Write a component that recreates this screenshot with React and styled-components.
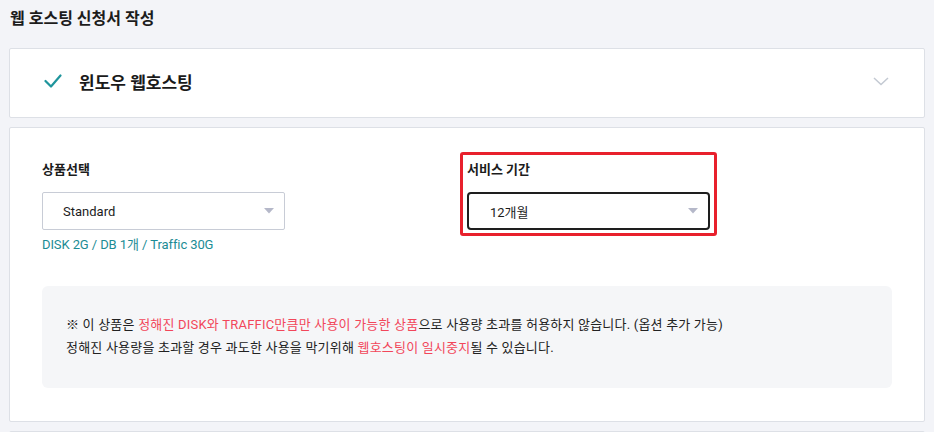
import styled, { createGlobalStyle } from 'styled-components';

const GlobalStyle = createGlobalStyle`
  body {
    margin: 0;
    background: #f3f4f8;
    font-family: Roboto, "Noto Sans CJK KR", sans-serif;
    color: #222;
  }
`;

const Page = styled.div`
  padding: 0 9px;
  height: 432px;
  overflow: hidden;
`;

const Title = styled.h1`
  margin: 0;
  padding: 9px 0 0 1px;
  height: 39px;
  font-size: 16px;
  line-height: 20px;
  font-weight: 700;
  color: #1c1c1c;
`;

const Card = styled.section`
  background: #fff;
  border: 1px solid #dde0e6;
  border-radius: 2px;
  margin-bottom: 9px;
  min-height: ${({ $stub }) => ($stub ? '40px' : '0')};
`;

const ProductHeader = styled.div`
  display: flex;
  align-items: center;
  height: 68px;
  padding: 0 35px 4px 34px;
  box-sizing: border-box;
`;

const ProductName = styled.span`
  flex: 1;
  margin-left: 17px;
  font-size: 17px;
  font-weight: 700;
  color: #1a1a1a;
`;

const Body = styled.div`
  padding: 33px 32px 33px 32px;
`;

const FieldGrid = styled.div`
  display: grid;
  grid-template-columns: 425px 1fr;
`;

const Field = styled.div`
  position: relative;
  width: 243px;
`;

const Highlight = styled.div`
  position: absolute;
  top: -9px;
  left: -7px;
  right: -7px;
  bottom: -6px;
  border: 3px solid #e8202c;
  border-radius: 3px;
  pointer-events: none;
`;

const Label = styled.div`
  font-size: 13px;
  line-height: 18px;
  font-weight: 700;
  color: #1c1c1c;
  margin-bottom: 13px;
`;

const Select = styled.div`
  display: flex;
  align-items: center;
  justify-content: space-between;
  height: 38px;
  box-sizing: border-box;
  padding: 0 10px 0 ${({ $active }) => ($active ? '21px' : '20px')};
  border: ${({ $active }) => ($active ? '2px solid #1e1e1e' : '1px solid #c8ccd6')};
  border-radius: ${({ $active }) => ($active ? '4px' : '2px')};
  font-size: 13px;
  color: #1c1c1c;
  background: #fff;
`;

const Spec = styled.div`
  margin-top: 6px;
  font-size: 13px;
  line-height: 18px;
  color: #1b8c95;
  letter-spacing: -0.1px;
`;

const Notice = styled.div`
  margin-top: 32px;
  background: #f5f6f8;
  border-radius: 6px;
  height: 102px;
  box-sizing: border-box;
  padding: 27px 24px 0 24px;
  font-size: 13px;
  line-height: 23px;
  letter-spacing: 0.2px;
  color: #222;
`;

const Em = styled.span`
  color: #f2465a;
`;

const Check = () => (
  <svg width="18" height="14" viewBox="0 0 18 14">
    <polyline points="1.5,7 7,12.5 16.5,1.5" fill="none" stroke="#1f959c" strokeWidth="2.2" strokeLinecap="round" strokeLinejoin="round" />
  </svg>
);

const Chevron = () => (
  <svg width="16" height="9" viewBox="0 0 16 9">
    <polyline points="1,1 8,7.5 15,1" fill="none" stroke="#c3c9d2" strokeWidth="1.5" />
  </svg>
);

const Caret = () => (
  <svg width="10" height="6" viewBox="0 0 10 6">
    <polygon points="0,0 10,0 5,5.5" fill="#b5b8c9" />
  </svg>
);

export default function App() {
  return (
    <>
      <GlobalStyle />
      <Page>
        <Title>웹 호스팅 신청서 작성</Title>
        <Card>
          <ProductHeader>
            <Check />
            <ProductName>윈도우 웹호스팅</ProductName>
            <Chevron />
          </ProductHeader>
        </Card>
        <Card>
          <Body>
            <FieldGrid>
              <div>
                <Field>
                  <Label>상품선택</Label>
                  <Select>
                    Standard
                    <Caret />
                  </Select>
                </Field>
                <Spec>DISK 2G / DB 1개 / Traffic 30G</Spec>
              </div>
              <div>
                <Field>
                  <Highlight />
                  <Label>서비스 기간</Label>
                  <Select $active>
                    12개월
                    <Caret />
                  </Select>
                </Field>
              </div>
            </FieldGrid>
            <Notice>
              ※ 이 상품은 <Em>정해진 DISK와 TRAFFIC만큼만 사용이 가능한 상품</Em>으로 사용량 초과를 허용하지 않습니다. (옵션 추가 가능)
              <br />
              정해진 사용량을 초과할 경우 과도한 사용을 막기위해 <Em>웹호스팅이 일시중지</Em>될 수 있습니다.
            </Notice>
          </Body>
        </Card>
        <Card $stub />
      </Page>
    </>
  );
}
